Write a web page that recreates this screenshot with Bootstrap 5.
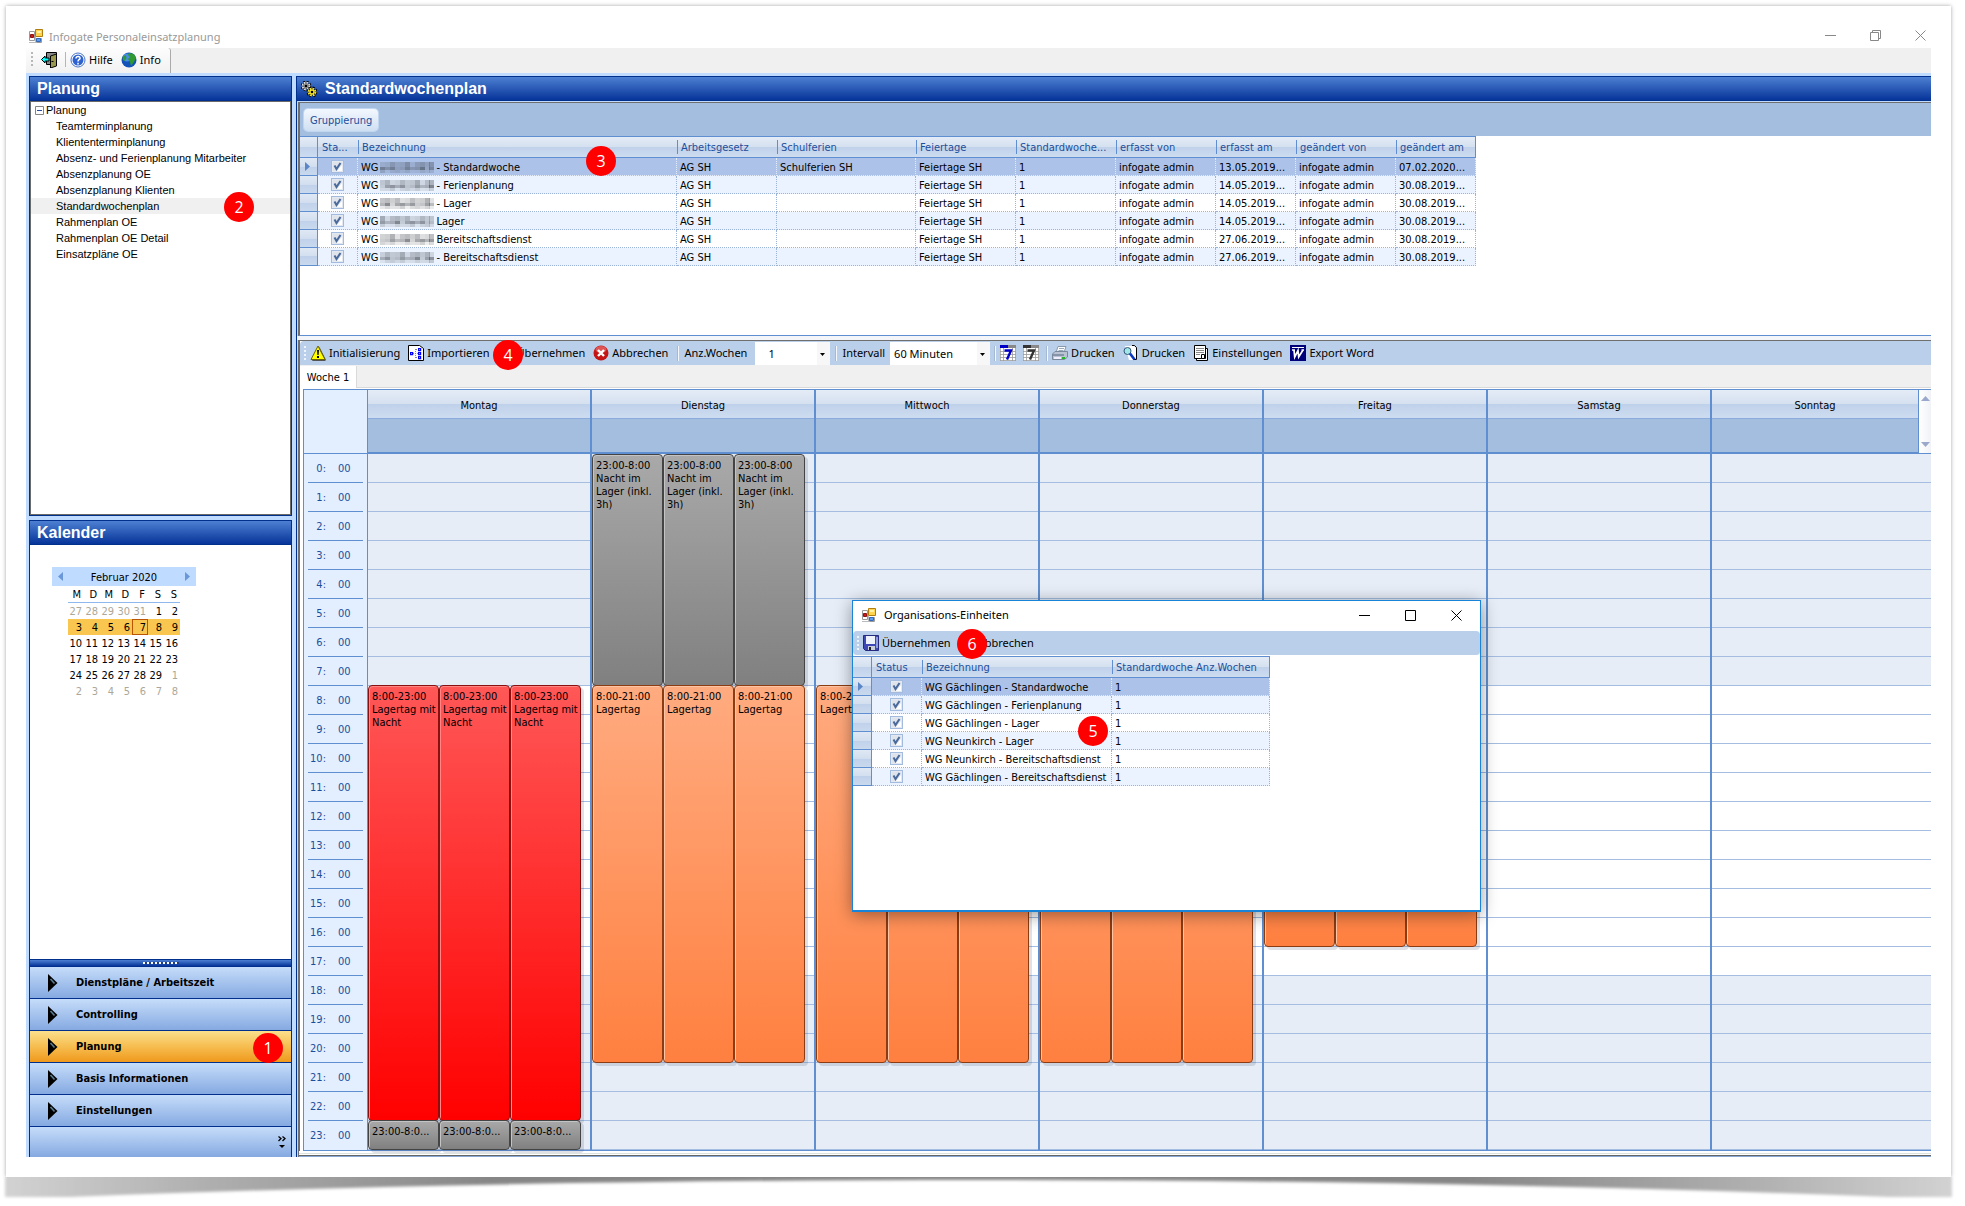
<!DOCTYPE html>
<html lang="de">
<head>
<meta charset="utf-8">
<meta name="viewport" content="width=device-width, initial-scale=1">
<title>Infogate Personaleinsatzplanung</title>
<link href="https://cdn.jsdelivr.net/npm/bootstrap@5.3.0/dist/css/bootstrap.min.css" rel="stylesheet">
<style>
:root{--navy:#00308c;--line:#5f8fd0;--ui:"Noto Sans","Open Sans",sans-serif;--grid:"DejaVu Sans Condensed","DejaVu Sans",sans-serif}
body{background:#fff;color:#000;font:11px/16px var(--grid)}
button,select{font:inherit;color:inherit}
svg{flex:none;display:block}
.sheet{margin:6px 14px 0 6px;padding:20px;background:#fff;box-shadow:0 0 4px rgba(0,0,0,.35)}
.sheet-foot{position:relative;z-index:1;height:29px;background:#fff}
.sheet-foot svg{height:29px}
/* window frame */
.win-title{height:22px;font:11px/20px var(--ui);color:#999;padding-left:3px}
.win-title > svg{margin-bottom:2px}
.win-title > span{padding-left:6px}
.win-btns{gap:34px;padding:0 5px 4px 0}
.plain{background:none;border:0;padding:0}
.main-tools{height:25px;background:#f0f0f0}
.main-tools .strip{background:linear-gradient(#fdfdfd,#f1f1f1);border-right:1px solid #aaa;border-radius:0 3px 0 0;padding:0 5px 2px 5px}
.tool{background:none;border:0;padding:0 4px;gap:3px;font:11px/22px var(--ui);white-space:nowrap}
.grip{width:2px;height:15px;background:repeating-linear-gradient(#b8b8b8 0 2px,transparent 2px 4px)}
.grip.pale{background:repeating-linear-gradient(#eef4fb 0 2px,transparent 2px 4px)}
.bar-sep{width:1px;height:15px;background:#b5b5b5}
.bar-sep.pale{background:#f4f8fc;box-shadow:-1px 0 #a5b9d3}
.desk{background:#bfdbff;padding:3px 0 0 3px;gap:4px}
.side{width:263px;flex:none;gap:4px}
.cap{height:25px;margin:0;padding-left:7px;background:linear-gradient(#4d80d2,#2a5ab5 50%,#06349a);border:1px solid var(--navy);color:#fff;font:bold 16px/23px "Liberation Sans",Arial,sans-serif}
.pane{border:1px solid var(--navy);border-top:0;background:#fff}
.tree{border:1px solid #6a6a6a;height:414px;font:11px/16px "Liberation Sans",Arial,sans-serif}
.tree ul{list-style:none;margin:0;padding:0}
.tree a{color:#000;text-decoration:none;display:block;padding-left:25px}
.tree a.on{background:#f0f0f0}
.tree .rootnode{padding-left:4px;gap:2px}
/* small month calendar */
.month{margin:22px 0 0 22px;width:144px}
.month-head{height:19px;line-height:18px;background:#bfdbff;padding:2px 6px 0}
.month-head svg{margin-bottom:3px}
.month table{margin-left:16px;width:112px;table-layout:fixed;border-collapse:separate;border-spacing:0}
.month th{font-weight:400;height:17px;line-height:15px;padding:1px 3px 0 0;text-align:right;border-bottom:1px solid #8fb8ee}
.month td{height:16px;line-height:15px;padding:1px 2px 0 0;text-align:right}
.month .off{color:#aca899}
.month .sel td{background:#f9c64f}
.month td.today{box-shadow:inset 0 0 0 1px #bb5503}
.split{height:7px;background:linear-gradient(#4d80d2,#06349a);border-top:1px solid var(--navy)}
.split i{width:36px;height:2px;background:repeating-linear-gradient(90deg,#fff 0 2px,#1d3f87 2px 4px)}
.navi{height:32px;border:0;border-top:1px solid var(--navy);background:linear-gradient(#c6ddfa,#85a9e1);padding:0 0 0 18px;gap:18px;font:bold 11px/31px var(--grid);text-align:left}
.navi.on{background:linear-gradient(#fbe08c,#f6bd50 50%,#ef991c)}
.navi-foot{height:31px;padding:0 5px 0 0}
/* data grids */
.work{border-left:1px solid var(--navy)}
.frame{border-left:2px solid #6f6f6f;border-top:1px solid #6f6f6f;margin-left:1px;background:#fff}
.upper{height:234px;border-bottom:1px solid var(--line);margin-top:1px}
.gutter{height:4px;background:#f4f5f8}
.groupbar{height:33px;background:#a4bee0;padding:6px 4px 5px}
.groupbtn{height:22px;border:0;border-radius:4px;background:linear-gradient(#f3f8fe,#cfdff2);color:#1c4e9b;padding:1px 6px 0;box-shadow:0 0 0 1px #c3d6ef;line-height:22px}
.dgrid{table-layout:fixed;border-collapse:separate;border-spacing:0;width:auto;margin:0}
.dgrid th,.dgrid td{overflow:hidden;white-space:nowrap;padding:2px 0 0 4px}
.dgrid th{height:22px;font-weight:400;color:#1c4e9b;border-top:1px solid var(--line);border-bottom:1px solid var(--line);line-height:18px;
 background:linear-gradient(var(--line),var(--line)) 0 50%/1px 14px no-repeat,linear-gradient(#e4ecf6,#d5e0f0 50%,#bfd1ea 50%,#cddcf0)}
.dgrid th:nth-child(-n+2){background:linear-gradient(#e4ecf6,#d5e0f0 50%,#bfd1ea 50%,#cddcf0)}
.dgrid th:first-child{border-right:1px solid var(--line)}
.dgrid th:last-child{border-right:1px solid var(--line)}
.dgrid td{height:18px;line-height:15px;border-bottom:1px dotted #9bb3d6;border-right:1px dotted #9bb3d6}
.dgrid td:nth-child(n+3){padding-left:3px}
.dgrid td:first-child{padding:0 0 0 5px;border-right:1px solid var(--line);border-bottom:1px solid var(--line);background:linear-gradient(#dfe8f4,#d2deef 50%,#bfd1ea 50%,#c9d9ee)}
.dgrid td:nth-child(2){padding:1px 0 0;line-height:16px;text-align:center}
.dgrid tbody tr:nth-child(even) td:not(:first-child){background:#eaf3ff}
.dgrid tbody tr:first-child td:not(:first-child){background:#adc2e8;border-color:#e4ecf8}
.tick{appearance:none;display:inline-block;vertical-align:middle;width:13px;height:13px;margin:-2px 0 0;border:1px solid #a3bbdf;background:#e4e9f1 url("data:image/svg+xml,%3Csvg xmlns='http://www.w3.org/2000/svg' viewBox='0 0 11 11'%3E%3Cpath d='M1 1h9v9H1z' fill='%23dfe3ea'/%3E%3Cpath d='M5 10h5V4z' fill='%23fff'/%3E%3Cpath d='M2.500 4.500l2 3.500 4-6' fill='none' stroke='%234a6a9c' stroke-width='2'/%3E%3C/svg%3E")}
.pix{display:inline-block;vertical-align:top;width:56px;margin:-1px 1px 0 1px}
/* planner */
.plan-tools{height:24px;background:#bad0ea;border-radius:4px 0 0 0}
.plan-tools .bar-sep{margin:0 5px 0 6px}
.plan-tools .bar-sep.tight{margin:0 0 0 5px}
.pick{appearance:none;border:0;border-radius:0;height:23px;font:11px/23px var(--ui);margin:1px 0 0 5px;background:#fff url("data:image/svg+xml,%3Csvg xmlns='http://www.w3.org/2000/svg' width='13' height='23'%3E%3Cpath fill='%23f7f7f7' d='M0 0h13v23H0z'/%3E%3Cpath d='M3 11h5L5.500 14z'/%3E%3C/svg%3E") right no-repeat}
.pick-n{width:75px;padding:0 0 0 13px}
.pick-m{width:100px;padding:0 0 0 4px}
.tabs-row{height:23px;background:#f0f0f0;box-shadow:inset 0 -1px #dadada}
.tabs-row button{border:0;border-right:1px solid #dadada;background:#fff;width:57px;padding:1px 0 0;margin-top:1px}
.viewbtn{padding:0 3px 0 4px}
.planner{margin:1px 0 0 3px;border-top:1px solid var(--line);border-left:1px solid var(--line);border-bottom:1px solid var(--line);display:grid;grid-template-columns:63px 223fr repeat(5,224fr) 221fr}
.hourcol{background:#e3efff;color:#1c4e9b}
.hourcol .corner{height:64px;border-bottom:1px solid var(--line)}
.hourcol .hr-row{height:29px;line-height:27px;padding-top:1px;margin:0 4px;border-bottom:1px solid var(--line)}
.hourcol .hr-row:last-child{border-color:transparent}
.hr-row span{width:18px;text-align:right}
.hr-row b{font-weight:400;margin-left:12px}
.dayc{border-left:2px solid var(--line);min-width:0}
.dayc:nth-child(2){border-left-width:1px}
.day-name{height:29px;line-height:31px;text-align:center;border-bottom:1px solid #8aabdb;background:linear-gradient(#e4ecf6,#d5e0f0 50%,#bfd1ea 50%,#cddcf0)}
.day-band{height:35px;background:#a4bee0;border-bottom:2px solid var(--line)}
.scroller{width:13px;height:64px;background:linear-gradient(90deg,#fff,#f0f2f7);border-left:1px solid var(--line);border-bottom:1px solid var(--line);padding:6px 0 6px 2px}
.slots{display:grid;grid-template-rows:repeat(24,29px);grid-template-columns:repeat(3,minmax(0,1fr));padding-right:9px;
 background:repeating-linear-gradient(transparent 0 28px,#a4bde0 28px 29px),linear-gradient(#e6edf7 0 232px,#fff 232px 522px,#e6edf7 522px)}
.shift{margin-top:-1px;border:1px solid;border-radius:4px;padding:4px 0 0 3px;line-height:13px;overflow:hidden;min-width:0;text-align:left}
.shift.dawn{margin-top:0}
.shift.night{background:linear-gradient(#a9a9a9,#808080);border-color:#444;box-shadow:inset 1px 1px #c4c4c4,3px 3px rgba(60,70,100,.16)}
.shift.lager{background:linear-gradient(#ffab80,#ff8040);border-color:#8b3c12;box-shadow:inset 1px 1px #ffc4a4,3px 3px rgba(60,70,100,.16)}
.shift.full{background:linear-gradient(#ff5757,#f00);border-color:#8a1010;box-shadow:inset 1px 1px #ff8585,3px 3px rgba(60,70,100,.16)}
.plan-end{height:6px;background:linear-gradient(#fff 0 2px,#dde3de 2px 3px,#fff 3px 4px,#666 4px 5px,#8aaad6 5px);margin-left:-1px}
/* dialog over the planner */
.orgwin{position:absolute;left:826px;top:574px;width:629px;height:312px;background:#fff;border:1px solid #1883d7;border-bottom-width:2px;box-shadow:0 3px 16px rgba(0,0,0,.4);z-index:5}
.orgwin .head{height:30px;font:11px/28px var(--ui);padding:0 18px 2px 9px}
.orgwin .head-btns{gap:35px}
.orgwin .bar{height:25px;background:#bad0ea;border-radius:4px;border-bottom:1px solid #fff}
/* numbered callouts */
.pin{position:absolute;z-index:6;width:30px;height:30px;border-radius:50%;background:#f00;color:#fff;font:16px/30px "Open Sans",sans-serif;text-align:center}
.pin-1{left:227px;top:1007px}.pin-2{left:198px;top:166px}.pin-3{left:560px;top:120px}
.pin-4{left:467px;top:314px}.pin-5{left:1052px;top:690px}.pin-6{left:931px;top:603px}
</style>
<script src="https://cdn.jsdelivr.net/npm/bootstrap@5.3.0/dist/js/bootstrap.bundle.min.js"></script>
</head>
<body>
<svg width="0" height="0" class="position-absolute" aria-hidden="true">
 <symbol id="i-app" viewBox="0 0 14 14"><path fill="#fff" stroke="#9a9a9a" d="M.5 2.500h5v9h-5zM7.500 9.500h5v4h-5z"/><path stroke="#bbb" d="M0 13.500h7M6.500 8v6"/><path fill="#d01818" stroke="#8a1515" d="M1.500 5.500h3v3h-3z"/><path fill="#ffd34d" stroke="#b07d10" d="M6.500.5h7v7h-7z"/><path fill="#fff0a8" d="M8 2h4v2H8z"/><path fill="#5b9bf0" stroke="#3468b8" d="M7.500 9.500h4v3h-4z"/></symbol>
 <symbol id="i-exit" viewBox="0 0 16 16"><path fill="#888" stroke="#000" d="M5.500.5h10v12h-10z"/><path fill="#9a9850" stroke="#000" d="M9.500 4l6-2v12l-6 2z"/><path fill="#0ff" stroke="#000" d="M.5 7.500L4 4v2h4v3H4v2z"/><path d="M10.500 9h2v1h-2z"/></symbol>
 <symbol id="i-help" viewBox="0 0 16 16"><circle cx="8" cy="8" r="7" fill="#fff" stroke="#4a74c8"/><circle cx="8" cy="8" r="5.500" fill="#2e62d0"/><path d="M6 6.500c0-3 4.500-2.500 4 0-.2 1-2 1-2 3M8 10.800v1.600" fill="none" stroke="#fff" stroke-width="1.500"/></symbol>
 <symbol id="i-globe" viewBox="0 0 16 16"><circle cx="8" cy="8" r="7.500" fill="#1352b8"/><circle cx="6" cy="5.500" r="4" fill="#69b4ff" opacity=".6"/><path fill="#2f9a32" d="M8 1l5 1 2 4-2 4-3 4-1-4-2-3 2-2-2-2zM1.500 5l3-2 1 3-2 3-1.500-1z"/></symbol>
 <symbol id="i-gears" viewBox="0 0 16 16"><circle cx="5" cy="5" r="4" fill="none" stroke="#000" stroke-width="2.600" stroke-dasharray="1.900 1.240"/><circle cx="5" cy="5" r="3.200" fill="#000"/><circle cx="5" cy="5" r="3.400" fill="none" stroke="#ddd" stroke-width="2" stroke-dasharray="1.700 .97"/><circle cx="5" cy="5" r="2" fill="none" stroke="#bbb"/><circle cx="11" cy="11" r="4" fill="none" stroke="#000" stroke-width="3" stroke-dasharray="1.900 1.240"/><circle cx="11" cy="11" r="3.600" fill="#000"/><circle cx="11" cy="11" r="3.400" fill="none" stroke="#f4e22c" stroke-width="2" stroke-dasharray="1.700 .97"/><circle cx="11" cy="11" r="2" fill="none" stroke="#f4e22c" stroke-width="1.400"/></symbol>
 <symbol id="i-warn" viewBox="0 0 16 16"><path fill="#555" d="M2 16h13l1-1L9.500 2z"/><path fill="#ff0" stroke="#6b6200" stroke-linejoin="round" d="M8 1L15 14.500H1z"/><path d="M7 5h2l-.4 5H7.400zM7 11h2v2H7z"/></symbol>
 <symbol id="i-imp" viewBox="0 0 16 16"><path fill="#fff" stroke="#000" d="M.5.5h11l4 3v12H.5z"/><path fill="none" stroke="#888" stroke-dasharray="1 1" d="M5 8.500h5M7.500 4v9M8 4.500h3M8 12.500h3"/><g fill="#fff" stroke="#00f" stroke-width="1.200"><path d="M2.600 7.600h2v2h-2zM10.600 3.600h2v2h-2zM10.600 7.600h2v2h-2zM10.600 11.600h2v2h-2z"/></g></symbol>
 <symbol id="i-save" viewBox="0 0 16 16"><path fill="#3f49b5" stroke="#252c80" d="M.5.5h15v15h-13l-2-2z"/><path fill="#eef2fb" d="M3 1h9v8H3z"/><path fill="#8e9be0" d="M13 2h2v11h-2z"/><path fill="#c9cede" d="M5 11h7v4H5z"/><path fill="#222" d="M6 12h2v3H6z"/></symbol>
 <symbol id="i-stop" viewBox="0 0 16 16"><circle cx="8" cy="8" r="7.500" fill="#c41414"/><ellipse cx="8" cy="4.500" rx="5.500" ry="3.500" fill="#e87070" opacity=".7"/><path stroke="#fff" stroke-width="2.400" d="M5 5l6 6M11 5l-6 6"/></symbol>
 <symbol id="i-cal" viewBox="0 0 16 16"><path fill="#fff" d="M0 0h16v16H0z"/><path fill="none" stroke="#999" stroke-width=".8" d="M0 6.500h16M0 9.500h16M0 12.500h16M3.500 3v13M12.500 3v13M0 15.500h16M15.500 0v16M.4 0v16"/><path fill="#888" d="M8 0h8v3H8z"/><path fill="currentColor" d="M0 0h8v3H0z"/><path fill="none" stroke="currentColor" stroke-width="2.400" d="M4.500 5.500h6.500L7 14.500"/></symbol>
 <symbol id="i-print" viewBox="0 0 16 16"><path fill="#fff" stroke="#8899aa" d="M6 1.500h8l-2 6H4z"/><path stroke="#9ab" d="M7 3.500h5M6.500 5.500h5"/><path fill="#b9c3d2" stroke="#7a889c" d="M3 6.500L.5 9v5.500h12L15.500 12V6.500z"/><path fill="#8594ab" d="M1 9h11v2H1z"/><path fill="#27b52c" d="M10 12h3v2h-3z"/><path fill="#eef" d="M2 12h7v2H2z"/></symbol>
 <symbol id="i-prev" viewBox="0 0 16 16"><path fill="#fff" d="M2 1h9l3 3v11H6z"/><path fill="none" stroke="#000" d="M9 .5h2.500l2 2v12H10"/><circle cx="4.500" cy="6" r="3.500" fill="#9fe8e8" stroke="#357"/><path stroke="#0a38c0" stroke-width="2.600" d="M7 8.500l4.500 6"/></symbol>
 <symbol id="i-set" viewBox="0 0 16 16"><path fill="#fff" stroke="#000" d="M3.500 3.500h11v12h-11z"/><path fill="#fff" stroke="#000" d="M1.500.5h11v13h-11z"/><path stroke="#888" d="M3 3.500h8M3 5.500h8M3 7.500h8M3 9.500h4"/><path fill="#fff" stroke="#000" d="M8.500 9.500h3v4h-3z"/></symbol>
 <symbol id="i-word" viewBox="0 0 16 16"><path fill="#00007b" d="M0 0h16v16H0z"/><path stroke="#fff" d="M2 2.500h12"/><path fill="none" stroke="#fff" stroke-width="1.700" d="M2 5h3M4 5l.7 7L8 5.500l.7 6.500L13 5M11.500 5H14"/></symbol>
 <symbol id="i-arrow" viewBox="0 0 10 18"><path d="M0 0l9.500 9L0 18z"/><path d="M2.500 5l4 4.500" stroke="#5b7b92" stroke-width="1.600" fill="none"/></symbol>
 <symbol id="i-row" viewBox="0 0 5 9"><path fill="#5a86c8" d="M0 0l5 4.500L0 9z"/></symbol>
</svg>

<div class="sheet">
<div class="position-relative">
 <header class="win-title d-flex align-items-center">
  <svg width="14" height="14"><use href="#i-app"/></svg><span class="flex-grow-1">Infogate Personaleinsatzplanung</span>
  <div class="win-btns d-flex">
   <button class="plain" aria-label="Minimieren"><svg width="11" height="11" stroke="#888"><path d="M0 5.500h11"/></svg></button>
   <button class="plain" aria-label="Wiederherstellen"><svg width="11" height="11" fill="none" stroke="#888"><path d="M.5 2.500h8v8h-8zM2.500 2V.5h8v8H9"/></svg></button>
   <button class="plain" aria-label="Schliessen"><svg width="11" height="11" stroke="#888"><path d="M.5.5l10 10M10.500.5l-10 10"/></svg></button>
  </div>
 </header>
 <nav class="main-tools d-flex" aria-label="Hauptleiste">
  <div class="strip d-flex align-items-center">
   <span class="grip me-1"></span>
   <button class="tool" aria-label="Beenden"><svg width="16" height="16"><use href="#i-exit"/></svg></button>
   <span class="bar-sep mx-1"></span>
   <button class="tool d-flex align-items-center ps-0"><svg width="16" height="16"><use href="#i-help"/></svg>Hilfe</button>
   <button class="tool d-flex align-items-center px-1"><svg width="16" height="16"><use href="#i-globe"/></svg>Info</button>
  </div>
 </nav>

 <div class="desk d-flex">
  <aside class="side d-flex flex-column">
   <section>
    <h2 class="cap">Planung</h2>
    <div class="pane"><div class="tree">
     <div class="rootnode d-flex align-items-center"><svg width="9" height="9"><path fill="#fff" stroke="#848484" d="M.5.5h8v8h-8z"/><path stroke="#2a4a9c" d="M2 4.500h5"/></svg>Planung</div>
     <ul>
      <li><a href="#">Teamterminplanung</a></li><li><a href="#">Kliententerminplanung</a></li><li><a href="#">Absenz- und Ferienplanung Mitarbeiter</a></li><li><a href="#">Absenzplanung OE</a></li><li><a href="#">Absenzplanung Klienten</a></li><li><a href="#" class="on">Standardwochenplan</a></li><li><a href="#">Rahmenplan OE</a></li><li><a href="#">Rahmenplan OE Detail</a></li><li><a href="#">Einsatzpläne OE</a></li>
     </ul>
    </div></div>
   </section>
   <section class="flex-grow-1 d-flex flex-column">
    <h2 class="cap">Kalender</h2>
    <div class="pane border-bottom-0 flex-grow-1 d-flex flex-column">
     <div class="month">
      <div class="month-head d-flex justify-content-between align-items-center">
       <button class="plain" aria-label="Voriger Monat"><svg width="5" height="9" fill="#6a97d8"><path d="M5 0L0 4.500 5 9z"/></svg></button>
       <span>Februar 2020</span>
       <button class="plain" aria-label="Nächster Monat"><svg width="5" height="9" fill="#6a97d8"><path d="M0 0l5 4.500L0 9z"/></svg></button>
      </div>
      <table><thead><tr><th>M</th><th>D</th><th>M</th><th>D</th><th>F</th><th>S</th><th>S</th></tr></thead><tbody id="days"></tbody></table>
     </div>
     <div class="mt-auto d-flex flex-column">
      <div class="split d-flex justify-content-center align-items-center"><i></i></div>
      <button class="navi d-flex align-items-center"><svg width="10" height="18"><use href="#i-arrow"/></svg>Dienstpläne / Arbeitszeit</button>
      <button class="navi d-flex align-items-center"><svg width="10" height="18"><use href="#i-arrow"/></svg>Controlling</button>
      <button class="navi on d-flex align-items-center"><svg width="10" height="18"><use href="#i-arrow"/></svg>Planung</button>
      <button class="navi d-flex align-items-center"><svg width="10" height="18"><use href="#i-arrow"/></svg>Basis Informationen</button>
      <button class="navi d-flex align-items-center"><svg width="10" height="18"><use href="#i-arrow"/></svg>Einstellungen</button>
      <button class="navi navi-foot d-flex align-items-center justify-content-end" aria-label="Weitere Schaltflächen"><svg width="8" height="12"><path fill="none" stroke="#000" stroke-width="1.300" d="M.5.5l2.500 2L.5 5M4.500.5l2.500 2L4.500 5"/><path d="M1 9h6l-3 3z"/></svg></button>
     </div>
    </div>
   </section>
  </aside>

  <main class="work flex-grow-1">
   <h1 class="cap border-start-0 border-end-0 d-flex align-items-center ps-1"><svg width="16" height="16"><use href="#i-gears"/></svg><span class="ps-2">Standardwochenplan</span></h1>
   <section class="frame upper">
    <div class="groupbar"><button class="groupbtn">Gruppierung</button></div>
    <table class="dgrid">
     <colgroup><col style="width:18px"><col style="width:40px"><col style="width:319px"><col style="width:100px"><col style="width:139px"><col style="width:100px"><col style="width:100px"><col style="width:100px"><col style="width:80px"><col style="width:100px"><col style="width:80px"></colgroup>
     <thead><tr><th></th><th>Sta...</th><th>Bezeichnung</th><th>Arbeitsgesetz</th><th>Schulferien</th><th>Feiertage</th><th>Standardwoche...</th><th>erfasst von</th><th>erfasst am</th><th>geändert von</th><th>geändert am</th></tr></thead>
     <tbody id="plans"></tbody>
    </table>
   </section>
   <div class="gutter"></div>
   <section class="frame">
    <div class="plan-tools d-flex align-items-center">
     <span class="grip pale ms-1 me-1"></span>
     <button class="tool d-flex align-items-center ps-0"><svg width="16" height="16"><use href="#i-warn"/></svg>Initialisierung</button>
     <button class="tool d-flex align-items-center"><svg width="16" height="16"><use href="#i-imp"/></svg>Importieren</button>
     <button class="tool d-flex align-items-center"><svg width="16" height="16"><use href="#i-save"/></svg>Übernehmen</button>
     <button class="tool d-flex align-items-center"><svg width="16" height="16"><use href="#i-stop"/></svg>Abbrechen</button>
     <span class="bar-sep pale"></span>
     <label class="tool px-0" for="weeks">Anz.Wochen</label>
     <select id="weeks" class="pick pick-n ms-2"><option>1</option></select>
     <span class="bar-sep pale"></span>
     <label class="tool px-0" for="step">Intervall</label>
     <select id="step" class="pick pick-m"><option>60 Minuten</option></select>
     <span class="bar-sep pale tight"></span>
     <button class="tool viewbtn" aria-label="Wochenansicht"><svg width="16" height="16" color="#0000c8"><use href="#i-cal"/></svg></button>
     <button class="tool viewbtn" aria-label="Tagesansicht"><svg width="16" height="16" color="#333"><use href="#i-cal"/></svg></button>
     <span class="bar-sep pale tight"></span>
     <button class="tool d-flex align-items-center"><svg width="16" height="16"><use href="#i-print"/></svg>Drucken</button>
     <button class="tool d-flex align-items-center"><svg width="16" height="16"><use href="#i-prev"/></svg>Drucken</button>
     <button class="tool d-flex align-items-center"><svg width="16" height="16"><use href="#i-set"/></svg>Einstellungen</button>
     <button class="tool d-flex align-items-center"><svg width="16" height="16"><use href="#i-word"/></svg>Export Word</button>
    </div>
    <div class="tabs-row d-flex"><button>Woche 1</button></div>
    <div class="planner" id="planner"></div>
    <div class="plan-end"></div>
   </section>
  </main>
 </div>

 <section class="orgwin" role="dialog" aria-label="Organisations-Einheiten">
  <div class="head d-flex align-items-center">
   <svg width="14" height="14"><use href="#i-app"/></svg><span class="ps-1 ms-1 flex-grow-1">Organisations-Einheiten</span>
   <div class="head-btns d-flex">
    <button class="plain" aria-label="Minimieren"><svg width="11" height="11" stroke="#000"><path d="M0 5.500h11"/></svg></button>
    <button class="plain" aria-label="Maximieren"><svg width="11" height="11" fill="none" stroke="#000"><path d="M.5.5h10v10H.5z"/></svg></button>
    <button class="plain" aria-label="Schliessen"><svg width="11" height="11" stroke="#000"><path d="M.5.5l10 10M10.500.5l-10 10"/></svg></button>
   </div>
  </div>
  <div class="bar d-flex align-items-center">
   <span class="grip pale mx-1"></span>
   <button class="tool d-flex align-items-center ps-0"><svg width="16" height="16"><use href="#i-save"/></svg>Übernehmen</button>
   <button class="tool d-flex align-items-center"><svg width="16" height="16"><use href="#i-stop"/></svg>Abbrechen</button>
  </div>
  <table class="dgrid">
   <colgroup><col style="width:19px"><col style="width:50px"><col style="width:190px"><col style="width:158px"></colgroup>
   <thead><tr><th></th><th>Status</th><th>Bezeichnung</th><th>Standardwoche Anz.Wochen</th></tr></thead>
   <tbody id="units"></tbody>
  </table>
 </section>

 <span class="pin pin-1">1</span><span class="pin pin-2">2</span><span class="pin pin-3">3</span>
 <span class="pin pin-4">4</span><span class="pin pin-5">5</span><span class="pin pin-6">6</span>
</div>
</div>
<div class="sheet-foot">
 <svg class="w-100" viewBox="0 0 1965 29" preserveAspectRatio="none" aria-hidden="true">
  <defs>
   <linearGradient id="fade"><stop offset="0" stop-color="#d2d2d2"/><stop offset=".1" stop-color="#b0b0b0"/><stop offset=".25" stop-color="#868686"/><stop offset=".75" stop-color="#868686"/><stop offset=".9" stop-color="#b0b0b0"/><stop offset="1" stop-color="#d2d2d2"/></linearGradient>
   <filter id="soft" x="-1%" y="-20%" width="102%" height="150%"><feGaussianBlur stdDeviation="1.500"/></filter>
  </defs>
  <path fill="url(#fade)" filter="url(#soft)" d="M5-4V20H70C400 7 700 3 980 3S1560 7 1890 20h62V-4z"/>
 </svg>
</div>

<script>
const byId = id => document.getElementById(id);

/* month sheet: five days of January lead in, eight of March follow */
const cells = [27,28,29,30,31].map(d => [d,1]).concat(Array.from({length:29},(_,i)=>[i+1,0]), Array.from({length:8},(_,i)=>[i+1,1]));
let html = '';
for (let w = 0; w < 6; w++) {
  html += `<tr${w === 1 ? ' class="sel"' : ''}>`;
  for (const [d, off] of cells.slice(w*7, w*7+7)) html += `<td class="${off ? 'off' : ''}${!off && d === 7 ? ' today' : ''}">${d}</td>`;
  html += '</tr>';
}
byId('days').innerHTML = html;

/* rows of both tables share the marker and the tick box */
const lead = (i, name) => `<td>${i ? '' : '<svg width="5" height="9"><use href="#i-row"/></svg>'}</td><td><input type="checkbox" class="tick" checked aria-label="${name}"></td>`;
const shades = [[1,.35],[6,.5],[11,.7],[16,.4],[21,.8],[26,.5],[31,.65],[36,.3],[41,.7],[46,.45],[50,.6]];
const pixels = r => `<svg class="pix" width="56" height="16" aria-hidden="true"><g fill="#3a3f48">` +
  shades.map(([x], i) => { const s = k => shades[(i*3 + r*5 + k) % 11][1]; return `<path opacity="${(s(0)*.5).toFixed(2)}" d="M${x} 3h5v5h-5z"/><path opacity="${(s(2)*.75).toFixed(2)}" d="M${x} 8h5v3h-5z"/><path opacity="${(s(4)*.3).toFixed(2)}" d="M${x} 11h5v3h-5z"/>`; }).join('') + '</g></svg>';
const plans = [['- Standardwoche','Schulferien SH','13.05.2019...','07.02.2020...'],['- Ferienplanung','','14.05.2019...','30.08.2019...'],['- Lager','','14.05.2019...','30.08.2019...'],['Lager','','14.05.2019...','30.08.2019...'],['Bereitschaftsdienst','','27.06.2019...','30.08.2019...'],['- Bereitschaftsdienst','','27.06.2019...','30.08.2019...']];
byId('plans').innerHTML = plans.map(([n, s, a, b], i) => `<tr>${lead(i, n)}<td>WG${pixels(i)}${n}</td><td>AG SH</td><td>${s}</td><td>Feiertage SH</td><td>1</td><td>infogate admin</td><td>${a}</td><td>infogate admin</td><td>${b}</td></tr>`).join('');
byId('units').innerHTML = ['WG Gächlingen - Standardwoche','WG Gächlingen - Ferienplanung','WG Gächlingen - Lager','WG Neunkirch - Lager','WG Neunkirch - Bereitschaftsdienst','WG Gächlingen - Bereitschaftsdienst'].map((n, i) => `<tr>${lead(i, n)}<td>${n}</td><td>1</td></tr>`).join('');

/* week planner: [kind, first hour, last hour, text, posts with a label], drawn once for each of three posts;
   posts behind the dialog carry no label */
const week = {
  Montag: [['full',8,23,'8:00-23:00<br>Lagertag mit Nacht',3],['night',23,24,'23:00-8:0...',3]],
  Dienstag: [['night dawn',0,8,'23:00-8:00<br>Nacht im<br>Lager (inkl.<br>3h)',3],['lager',8,21,'8:00-21:00<br>Lagertag',3]],
  Mittwoch: [['lager',8,21,'8:00-21:00<br>Lagertag',1]],
  Donnerstag: [['lager',8,21,'',0]],
  Freitag: [['lager',8,17,'',0]],
  Samstag: [], Sonntag: []
};
html = '<div class="hourcol"><div class="corner"></div>';
for (let h = 0; h < 24; h++) html += `<div class="hr-row d-flex"><span>${h}:</span><b>00</b></div>`;
html += '</div>';
for (const [day, shifts] of Object.entries(week)) {
  const head = `<div class="flex-grow-1"><div class="day-name">${day}</div><div class="day-band"></div></div>`;
  html += `<div class="dayc"><div class="d-flex">${head}${day === 'Sonntag' ? '<div class="scroller d-flex flex-column justify-content-between"><svg width="9" height="5" fill="#9aa8cc"><path d="M4.500 0L9 5H0z"/></svg><svg width="9" height="5" fill="#9aa8cc"><path d="M0 0h9L4.500 5z"/></svg></div>' : ''}</div><div class="slots">`;
  for (const [kind, from, to, text, labelled] of shifts) for (let c = 1; c < 4; c++)
    html += `<div class="shift ${kind}" style="grid-area:${from+1}/${c}/${to+1}/${c+1}">${c <= labelled ? text : ''}</div>`;
  html += '</div></div>';
}
byId('planner').innerHTML = html;
</script>
</body>
</html>
